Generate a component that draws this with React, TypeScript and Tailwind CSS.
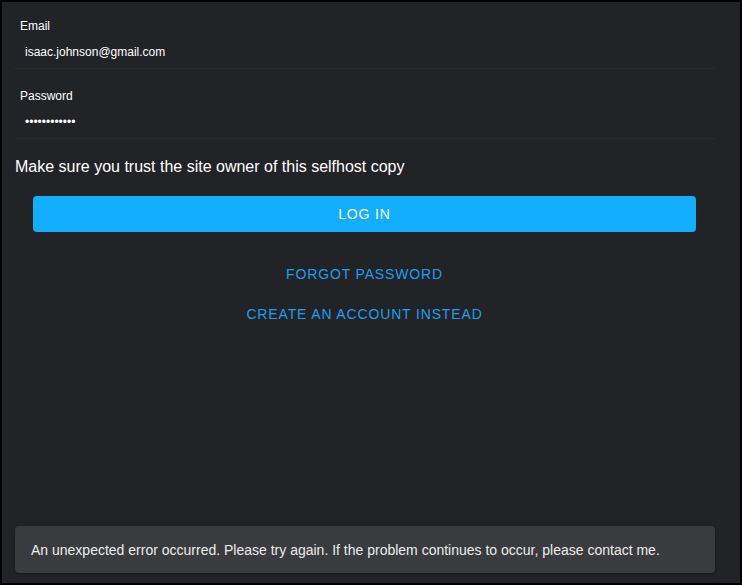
import React from "react";

type FieldProps = {
  label: string;
  value: string;
  className?: string;
};

function Field({ label, value, className = "" }: FieldProps) {
  return (
    <div className={`flex flex-col border-b border-[#292a2e] pb-[9px] ${className}`}>
      <label className="pl-[6px] text-[12px] leading-[14px] text-white">{label}</label>
      <div className="mt-3 pl-[11px] text-[12px] leading-[14px] text-white">{value}</div>
    </div>
  );
}

export default function App() {
  return (
    <div className="flex h-[585px] w-[742px] flex-col border-2 border-black bg-[#222327] font-['Liberation_Sans',Arial,sans-serif]">
      <div className="flex flex-1 flex-col pl-3 pr-[25px] pt-[17px]">
        <Field label="Email" value="isaac.johnson@gmail.com" />
        <Field label="Password" value="••••••••••••" className="mt-[20px]" />

        <p className="mt-[19px] pl-px text-[16px] leading-[18px] text-white">
          Make sure you trust the site owner of this selfhost copy
        </p>

        <button className="mx-[19px] mt-[20px] h-9 rounded bg-[#14aeff] text-[14px] uppercase tracking-[0.85px] text-white">
          Log in
        </button>

        <button className="mt-[34px] self-center text-[14px] leading-4 uppercase tracking-[0.85px] text-[#1d9ff0]">
          Forgot password
        </button>
        <button className="mt-6 self-center text-[14px] leading-4 uppercase tracking-[0.85px] text-[#1d9ff0]">
          Create an account instead
        </button>

        <div className="mb-[10px] ml-px mt-auto flex h-[47px] items-center rounded bg-[#3a3b3f] pl-4 text-[14px] leading-4 text-[#ececec] shadow-[0_1px_3px_rgba(0,0,0,0.3)]">
          An unexpected error occurred. Please try again. If the problem continues to occur, please contact me.
        </div>
      </div>
    </div>
  );
}
